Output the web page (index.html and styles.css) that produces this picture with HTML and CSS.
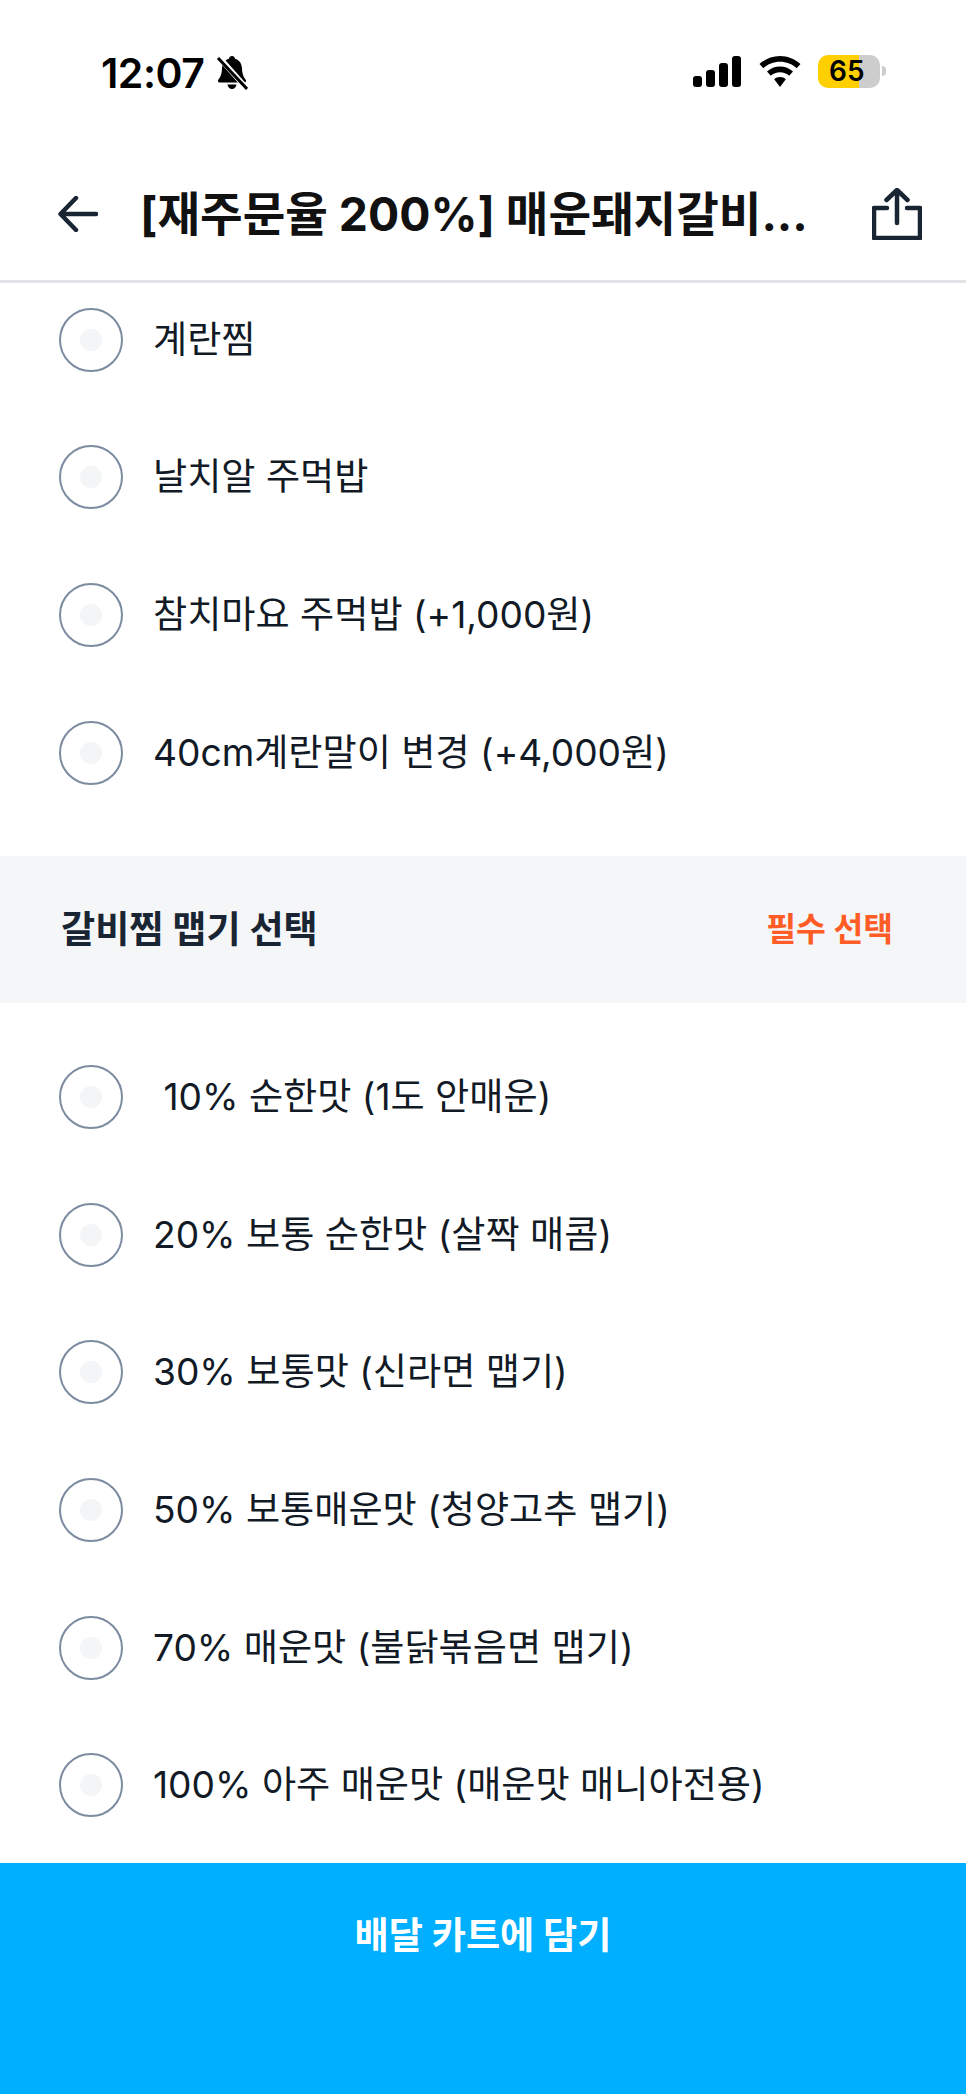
FILE: index.html
```html
<!DOCTYPE html>
<html lang="ko">
<head>
<meta charset="utf-8">
<title>배달 카트에 담기</title>
<link rel="stylesheet" href="styles.css">
</head>
<body>
<div class="screen">
  <header class="top">
    <div class="status">
      <div class="status-left">
        <span class="time">12:07</span>
        <svg class="bell" viewBox="0 0 32 36" aria-hidden="true">
          <path d="M16 1c1.7 0 2.8 1.100 3 2.700 4.600 1.300 6.800 5 7 9.800.2 4.500.9 8 3.700 11.300.9 1.200.2 2.700-1.300 2.700H3.600c-1.500 0-2.200-1.500-1.300-2.700C5.100 21.500 5.800 18 6 13.500 6.200 8.700 8.400 5 13 3.700 13.200 2.100 14.300 1 16 1z"/>
          <path d="M11.500 29.500h9c-.3 2.600-2.200 4.500-4.500 4.500s-4.200-1.900-4.500-4.500z"/>
          <path class="bell-gap" d="M1 0 33 36"/>
          <path class="bell-slash" d="M2 3 31 34"/>
        </svg>
      </div>
      <div class="status-right">
        <svg class="signal" viewBox="0 0 48 31" aria-hidden="true">
          <rect x="0" y="20" width="9" height="11" rx="3"/>
          <rect x="13" y="14" width="9" height="17" rx="3"/>
          <rect x="26" y="7" width="9" height="24" rx="3"/>
          <rect x="39" y="0" width="9" height="31" rx="3"/>
        </svg>
        <svg class="wifi" viewBox="0 0 42 31" aria-hidden="true">
          <path d="M21 0c7.800 0 15 3 20.500 8l-3.800 4.200C33.200 8.200 27.400 5.800 21 5.800S8.800 8.200 4.300 12.200L.5 8C6 3 13.200 0 21 0z"/>
          <path d="M21 10.500c5 0 9.500 1.900 13 5l-3.800 4.200c-2.500-2.200-5.700-3.500-9.200-3.500s-6.700 1.300-9.200 3.500L8 15.500c3.500-3.100 8-5 13-5z"/>
          <path d="M21 21c2.300 0 4.300.8 5.800 2.200L21 31l-5.800-7.800C16.700 21.800 18.700 21 21 21z"/>
        </svg>
        <div class="battery">
          <div class="battery-body"><span class="battery-level">65</span></div>
          <span class="battery-nub"></span>
        </div>
      </div>
    </div>
    <div class="navbar">
      <svg class="back" viewBox="0 0 40 36" aria-hidden="true">
        <path d="M38 18H3M18 2 2.500 18 18 34"/>
      </svg>
      <h1 class="title">[재주문율 200%] 매운돼지갈비...</h1>
      <svg class="share" viewBox="0 0 50 52" aria-hidden="true">
        <path d="M25 35V3M14.500 12 25 2l10.500 10M15 20H2v30h46V20H35"/>
      </svg>
    </div>
  </header>

  <main class="content">
    <ul class="options options-scrolled">
      <li class="option"><span class="radio"></span><span class="label">계란찜</span></li>
      <li class="option"><span class="radio"></span><span class="label">날치알 주먹밥</span></li>
      <li class="option"><span class="radio"></span><span class="label">참치마요 주먹밥 (+1,000원)</span></li>
      <li class="option"><span class="radio"></span><span class="label">40cm계란말이 변경 (+4,000원)</span></li>
    </ul>
    <section class="group-head">
      <h2 class="group-title">갈비찜 맵기 선택</h2>
      <span class="group-required">필수 선택</span>
    </section>
    <ul class="options options-padded">
      <li class="option"><span class="radio"></span><span class="label">&nbsp;10% 순한맛 (1도 안매운)</span></li>
      <li class="option"><span class="radio"></span><span class="label">20% 보통 순한맛 (살짝 매콤)</span></li>
      <li class="option"><span class="radio"></span><span class="label">30% 보통맛 (신라면 맵기)</span></li>
      <li class="option"><span class="radio"></span><span class="label">50% 보통매운맛 (청양고추 맵기)</span></li>
      <li class="option"><span class="radio"></span><span class="label">70% 매운맛 (불닭볶음면 맵기)</span></li>
      <li class="option"><span class="radio"></span><span class="label">100% 아주 매운맛 (매운맛 매니아전용)</span></li>
    </ul>
  </main>

  <footer class="cart">
    <span class="cart-label">배달 카트에 담기</span>
  </footer>
</div>
</body>
</html>
```
FILE: styles.css
```css
* { box-sizing: border-box; }
html, body { margin: 0; padding: 0; background: #fff; }
body {
  font-family: Inter, "Noto Sans CJK KR", "Noto Sans", sans-serif;
  color: #111a25;
}
.screen {
  width: 966px;
  height: 2094px;
  display: flex;
  flex-direction: column;
  overflow: hidden;
}
.top {
  flex: none;
  height: 283px;
  background: #fff;
  border-bottom: 3px solid #e1e3e6;
  position: relative;
  z-index: 1;
}
.status {
  height: 133px;
  display: flex;
  justify-content: space-between;
  align-items: flex-start;
  padding: 53px 80px 0 101px;
}
.status-left { display: flex; align-items: center; gap: 12px; height: 40px; }
.time { font-size: 41px; font-weight: 600; line-height: 40px; color: #000; letter-spacing: -0.5px; }
.bell { width: 32px; height: 36px; fill: #000; }
.bell-gap { stroke: #fff; stroke-width: 5.500; fill: none; }
.bell-slash { stroke: #000; stroke-width: 3; fill: none; }
.status-right { display: flex; align-items: center; height: 40px; margin-top: -2px; }
.signal { width: 48px; height: 31px; fill: #000; margin-right: 18px; }
.wifi { width: 42px; height: 31px; fill: #000; margin-right: 17px; }
.battery { display: flex; align-items: center; gap: 2px; }
.battery-body {
  width: 62px;
  height: 33px;
  border-radius: 10px;
  background: linear-gradient(to right, #ffcf00 41px, #cdcdcd 41px);
  display: flex;
  align-items: center;
  padding-left: 11px;
}
.battery-level { font-size: 28px; font-weight: 600; line-height: 33px; color: #000; }
.battery-nub {
  width: 4px;
  height: 10px;
  background: #cdcdcd;
  border-radius: 0 4px 4px 0;
}
.navbar {
  height: 147px;
  display: flex;
  align-items: center;
  padding: 14px 44px 0 58px;
}
.back {
  flex: none;
  width: 40px;
  height: 36px;
  fill: none;
  stroke: #1a2533;
  stroke-width: 4.500;
  stroke-linecap: round;
  stroke-linejoin: round;
}
.title {
  flex: 1;
  margin: 0 0 0 42px;
  font-size: 46.300px;
  font-weight: 700;
  line-height: 60px;
  color: #111;
  white-space: nowrap;
}
.share {
  flex: none;
  width: 50px;
  height: 52px;
  fill: none;
  stroke: #1a2533;
  stroke-width: 4.500;
  stroke-linecap: round;
  stroke-linejoin: round;
}
.content { flex: 1; min-height: 0; overflow: hidden; }
.options { list-style: none; margin: 0; padding: 0; }
.options-scrolled { margin-top: -12px; padding-bottom: 35px; }
.options-padded { padding-top: 25px; }
.option {
  height: 137.600px;
  display: flex;
  align-items: center;
  padding-left: 59px;
}
.radio {
  flex: none;
  width: 64px;
  height: 64px;
  border-radius: 50%;
  border: 2.500px solid #7c8ba0;
  display: flex;
  align-items: center;
  justify-content: center;
}
.radio::after {
  content: "";
  width: 22px;
  height: 22px;
  border-radius: 50%;
  background: #f3f5f7;
}
.label { margin-left: 30px; font-size: 37.150px; line-height: 48px; color: #111a25; white-space: nowrap; }
.group-head {
  height: 147px;
  background: #f5f6f8;
  display: flex;
  align-items: center;
  justify-content: space-between;
  padding: 0 73px 0 61px;
}
.group-title { margin: 0; font-size: 37.150px; font-weight: 700; line-height: 50px; color: #1a2533; }
.group-required { font-size: 32.400px; font-weight: 700; line-height: 46px; color: #ff5c26; }
.cart {
  flex: none;
  height: 231px;
  background: #00afff;
  display: flex;
  justify-content: center;
  padding-top: 48px;
}
.cart-label { font-size: 37.150px; font-weight: 700; line-height: 50px; color: #fff; }
```
